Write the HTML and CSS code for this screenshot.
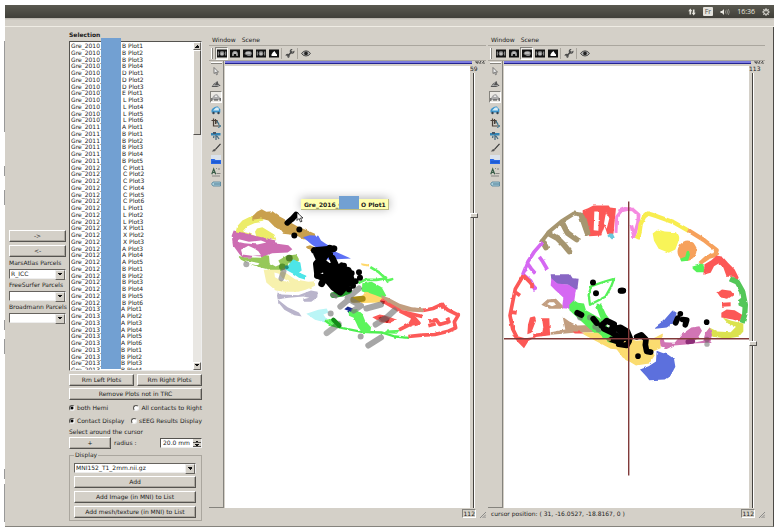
FILE: index.html
```html
<!DOCTYPE html>
<html lang="en">
<head>
<meta charset="utf-8">
<title>Selection</title>
<link rel="stylesheet" href="styles.css">
</head>
<body>
<svg class="defs" aria-hidden="true">
  <filter id="rough" x="-10%" y="-10%" width="120%" height="120%"><feTurbulence type="fractalNoise" baseFrequency=".06" numOctaves="2" seed="4"/><feDisplacementMap in="SourceGraphic" scale="7" xChannelSelector="R" yChannelSelector="G"/></filter>
  <symbol id="i-head" viewBox="0 0 10 8"><path d="M0 0h10v8H0z" fill="#111"/><circle cx="5" cy="4" r="2.4" fill="#777"/><path d="M3.600 3h2.800v2.600H3.600z" fill="#bbb"/><path d="M1.300 2v4M8.700 2v4" stroke="#ddd" stroke-width=".7"/></symbol>
  <symbol id="i-coronal" viewBox="0 0 10 8"><path d="M0 0h10v8H0z" fill="#111"/><path d="M2 6.500Q1.600 1.600 5 1.600T8 6.500L6 6.200V4.500H4V6.200z" fill="#999"/><path d="M3.500 3.500h3" stroke="#ddd"/></symbol>
  <symbol id="i-sagittal" viewBox="0 0 10 8"><path d="M0 0h10v8H0z" fill="#111"/><path d="M1.500 4.500Q2 1.500 5.500 1.500T8.800 4.500L7.500 6.500H5z" fill="#888"/><path d="M3 3.500h4.500" stroke="#eee"/></symbol>
  <symbol id="i-mesh" viewBox="0 0 10 8"><path d="M0 0h10v8H0z" fill="#111"/><path d="M2.500 6.500V5Q3.500 2.500 5.500 1.500L7 4 8 5v1.500z" fill="#fff"/></symbol>
  <symbol id="i-wrench" viewBox="0 0 10 10"><path d="M2 8.200 7.500 2.500" stroke="#4b4b4b" stroke-width="1.700"/><path d="M9.300 2.200A2 2 0 1 1 7.500.6M.6 7.500A1.700 1.700 0 1 1 2.500 9.300" fill="none" stroke="#4b4b4b" stroke-width="1.300"/></symbol>
  <symbol id="i-eye" viewBox="0 0 10 8"><path d="M.5 4Q2 1.300 5 1.300T9.500 4Q8 6.500 5 6.500T.5 4z" fill="#aaa" stroke="#333" stroke-width=".8"/><circle cx="5" cy="3.900" r="1.800" fill="#222"/></symbol>
  <symbol id="i-arrow" viewBox="0 0 10 10"><path d="M3 1.500v6l1.500-1.200 1 2.500 1-.5-1-2.200h2z" fill="#eee" stroke="#555" stroke-width=".7"/></symbol>
  <symbol id="i-plane" viewBox="0 0 10 10"><path d="M.5 8 3 4.500 6.500 2l1 3L9.700 6.500 6 8z" fill="#555"/><path d="M2 6.500h6M5 3l-2 4" stroke="#bbb" stroke-width=".7"/></symbol>
  <symbol id="i-car" viewBox="0 0 10 10"><path d="M1 8V6Q3 2 6 2l2 2.500L9.500 6v2z" fill="#aaa"/><path d="M3.500 5 5 3l1.500 2z" fill="#eee"/><path d="M.8 9V6M4 9V7M6 9V7M9.200 9V6" stroke="#333" stroke-width=".9"/></symbol>
  <symbol id="i-bluecar" viewBox="0 0 10 10"><path d="M.5 7.500V5Q3 1 7 1.500l2.300 3v3z" fill="#3c94cc"/><path d="M2 5.500 5 2.500H7.500L8 5.500z" fill="#d7eef8"/><circle cx="2.500" cy="8" r="1.200" fill="#345"/><circle cx="7.500" cy="8" r="1.200" fill="#345"/></symbol>
  <symbol id="i-crop" viewBox="0 0 10 10"><path d="M.5 2.500h5.500v3M2.500.5v7.500h6M4.500 1v5" fill="none" stroke="#4a4038" stroke-width="1.200"/><path d="M7.300 6.300 9.800 8 7.300 9.700M6 3l2 3" stroke="#268" fill="none"/></symbol>
  <symbol id="i-tap" viewBox="0 0 10 10"><path d="M0 2h9.500v2.500H0z" fill="#3384b4"/><path d="M2 1h3v2H2z" fill="#456"/><path d="M5 4v5M3 5l-.5 2M6 5l2 3" stroke="#4a6d80" stroke-width="1.300"/></symbol>
  <symbol id="i-brush" viewBox="0 0 10 10"><path d="m9.500.8-5 5.500" stroke="#333" stroke-width="1.100"/><path d="M.8 8.500 3 6l2.200.5L4 8.300z" fill="#555"/></symbol>
  <symbol id="i-folder" viewBox="0 0 10 10"><path d="M0 0h10v5H0z" fill="#dbe3ed"/><path d="M0 9V4h3.500l1 1H10v4z" fill="#2868e8"/><path d="M1 7h8" stroke="#1650bb"/></symbol>
  <symbol id="i-label" viewBox="0 0 10 10"><path d="M.8 7.200 2.700 2l2 5.200M1.500 5.500H4" fill="none" stroke="#365a45" stroke-width="1.200"/><path d="M5 1.500h1M7 2h2M5.500 6.500H9.500M1 9h8" stroke="#666" stroke-width=".7"/></symbol>
  <symbol id="i-tag" viewBox="0 0 10 10"><path d="m.5 5 1.500-2h7.500v4H2z" fill="#acd0dc" stroke="#4d7f97" stroke-width=".8"/><path d="M3 5h6" stroke="#487991" stroke-width="1"/></symbol>
</svg>

<div class="desktop">
  <header class="topbar">
    <svg class="tray" viewBox="0 0 8 8"><path d="M2.300 6.500V2M5.700 1.500V6" stroke="#e8e6df" stroke-width="1.600"/><path d="M.3 3.200 2.300.5l2 2.700zM3.700 4.800l2 2.700 2-2.700z" fill="#e8e6df"/></svg>
    <span class="lang">Fr</span>
    <svg class="tray wide" viewBox="0 0 10 8"><path d="M.5 3h1.500l2-2v6L2 5H.5z" fill="#e8e6df"/><path d="M5.300 2.500q1 1.500 0 3M6.800 1.700q1.500 2.300 0 4.600M8.300 1q2 3 0 6" fill="none" stroke="#a9a79f" stroke-width=".7"/></svg>
    <span class="clock">16:36</span>
    <svg class="tray" viewBox="0 0 8 8"><circle cx="4" cy="4" r="2.300" fill="none" stroke="#e8e6df" stroke-width="1"/><path d="M4 .3v3.200M.3 4h1.400M6.300 4h1.400M4 6.300v1.400M1.400 1.400l1 1M5.600 5.600l1 1M1.400 6.600l1-1M5.600 2.400l1-1" stroke="#e8e6df" stroke-width="1.100"/></svg>
  </header>
  <div class="band"></div>

  <main class="workspace">
    <section class="parcels">
      <button class="btn move">-&gt;</button>
      <button class="btn move">&lt;-</button>
      <label for="mars">MarsAtlas Parcels</label>
      <div class="combo"><select id="mars"><option>R_ICC</option></select></div>
      <label for="free">FreeSurfer Parcels</label>
      <div class="combo"><select id="free"><option></option></select></div>
      <label for="brod">Broadmann Parcels</label>
      <div class="combo"><select id="brod"><option></option></select></div>
    </section>

    <section class="selection">
      <h1>Selection</h1>
      <div class="listbox">
        <ul class="plots">
          <li><span>Gre_2010_</span>B Plot1</li><li><span>Gre_2010_</span>B Plot2</li><li><span>Gre_2010_</span>B Plot3</li><li><span>Gre_2010_</span>B Plot4</li>
          <li><span>Gre_2010_</span>D Plot1</li><li><span>Gre_2010_</span>D Plot2</li><li><span>Gre_2010_</span>D Plot3</li><li><span>Gre_2010_</span>E Plot1</li>
          <li class="in"><span>Gre_2010_</span>L Plot3</li><li class="in"><span>Gre_2010_</span>L Plot4</li><li class="in"><span>Gre_2010_</span>L Plot5</li><li class="in"><span>Gre_2010_</span>L Plot6</li>
          <li><span>Gre_2011_</span>A Plot1</li><li><span>Gre_2011_</span>B Plot1</li><li><span>Gre_2011_</span>B Plot2</li><li><span>Gre_2011_</span>B Plot3</li><li><span>Gre_2011_</span>B Plot4</li><li><span>Gre_2011_</span>B Plot5</li>
          <li class="in"><span>Gre_2012_</span>C Plot1</li><li class="in"><span>Gre_2012_</span>C Plot2</li><li class="in"><span>Gre_2012_</span>C Plot3</li><li class="in"><span>Gre_2012_</span>C Plot4</li><li class="in"><span>Gre_2012_</span>C Plot5</li><li class="in"><span>Gre_2012_</span>C Plot6</li>
          <li class="in"><span>Gre_2012_</span>L Plot1</li><li class="in"><span>Gre_2012_</span>L Plot2</li><li class="in"><span>Gre_2012_</span>L Plot3</li>
          <li class="in"><span>Gre_2012_</span>X Plot1</li><li class="in"><span>Gre_2012_</span>X Plot2</li><li class="in"><span>Gre_2012_</span>X Plot3</li>
          <li><span>Gre_2012_</span>A Plot3</li><li><span>Gre_2012_</span>A Plot4</li><li><span>Gre_2012_</span>A Plot5</li>
          <li><span>Gre_2012_</span>B Plot1</li><li><span>Gre_2012_</span>B Plot2</li><li><span>Gre_2012_</span>B Plot3</li><li><span>Gre_2012_</span>B Plot4</li><li><span>Gre_2012_</span>B Plot5</li><li><span>Gre_2012_</span>B Plot6</li>
          <li class="out"><span>Gre_2013_</span>A Plot1</li><li class="out"><span>Gre_2013_</span>A Plot2</li><li class="out"><span>Gre_2013_</span>A Plot3</li><li class="out"><span>Gre_2013_</span>A Plot4</li><li class="out"><span>Gre_2013_</span>A Plot5</li><li class="out"><span>Gre_2013_</span>A Plot6</li>
          <li class="out"><span>Gre_2013_</span>B Plot1</li><li class="out"><span>Gre_2013_</span>B Plot2</li><li class="out"><span>Gre_2013_</span>B Plot3</li><li class="out"><span>Gre_2013_</span>B Plot4</li>
        </ul>
        <div class="scroll"><button class="cap up" aria-label="Scroll up"></button><div class="thumb"></div><button class="cap down" aria-label="Scroll down"></button></div>
        <div class="mask"></div>
      </div>
      <div class="pair"><button class="btn">Rm Left Plots</button><button class="btn">Rm Right Plots</button></div>
      <button class="btn">Remove Plots not in TRC</button>
      <div class="radios"><label><input type="radio" name="hemi" checked>both Hemi</label><label><input type="radio" name="hemi">All contacts to Right</label></div>
      <div class="radios"><label><input type="radio" name="disp" checked>Contact Display</label><label><input type="radio" name="disp">sEEG Results Display</label></div>
      <p class="hint">Select around the cursor</p>
      <div class="radius">
        <button class="btn">+</button>
        <label for="radius">radius :</label>
        <div class="spin"><input id="radius" type="text" value="20.0 mm"><div class="steps"><button class="up" aria-label="Increase"></button><button class="down" aria-label="Decrease"></button></div></div>
      </div>
      <fieldset class="display">
        <legend>Display</legend>
        <div class="stack">
          <div class="combo"><select aria-label="Display"><option>MNI152_T1_2mm.nii.gz</option></select></div>
          <button class="btn">Add</button>
          <button class="btn">Add Image (in MNI) to List</button>
          <button class="btn">Add mesh/texture (in MNI) to List</button>
        </div>
      </fieldset>
    </section>

    <section class="viewer">
      <nav class="menu"><a href="#">Window</a><a href="#">Scene</a></nav>
      <div class="toolbar">
        <i class="grip"></i>
        <button class="tool on" aria-label="Axial"><svg><use href="#i-head"/></svg></button>
        <button class="tool" aria-label="Coronal"><svg><use href="#i-coronal"/></svg></button>
        <button class="tool" aria-label="Sagittal"><svg><use href="#i-sagittal"/></svg></button>
        <button class="tool" aria-label="Oblique"><svg><use href="#i-head"/></svg></button>
        <button class="tool" aria-label="3D"><svg><use href="#i-mesh"/></svg></button>
        <i class="sep"></i>
        <button class="tool" aria-label="Settings"><svg><use href="#i-wrench"/></svg></button>
        <i class="sep"></i>
        <button class="tool" aria-label="View"><svg><use href="#i-eye"/></svg></button>
      </div>
      <div class="body">
        <div class="side">
          <i class="bar"></i>
          <button class="tool" aria-label="Select"><svg><use href="#i-arrow"/></svg></button>
          <button class="tool" aria-label="Plane"><svg><use href="#i-plane"/></svg></button>
          <button class="tool on" aria-label="Move"><svg><use href="#i-car"/></svg></button>
          <button class="tool" aria-label="Turn"><svg><use href="#i-bluecar"/></svg></button>
          <button class="tool" aria-label="Transform"><svg><use href="#i-crop"/></svg></button>
          <button class="tool" aria-label="Flight"><svg><use href="#i-tap"/></svg></button>
          <button class="tool" aria-label="Brush"><svg><use href="#i-brush"/></svg></button>
          <button class="tool" aria-label="Open"><svg><use href="#i-folder"/></svg></button>
          <button class="tool" aria-label="Annotate"><svg><use href="#i-label"/></svg></button>
          <button class="tool" aria-label="Tag"><svg><use href="#i-tag"/></svg></button>
        </div>
        <div class="stage">
          <div class="progress"></div>
          <div class="view">
            <svg class="scene" viewBox="225 66 245 441">
              <g transform="translate(225 190) scale(.333333)">
                <g class="tissue">
                  <path fill="#ecec68" fill-rule="evenodd" d="m84 74 32 6-2 14-26 4-22 10-14 16 20 4 22 10-4-14 6-10 16-4 16 10 20 12 6 16-32-4-40-4-32-8-18-6 4-18 16-18z"/>
                  <path fill="#c9a04e" d="m82 78 14-14 14-8 14 8 18-2 22 16 22 12 32 18 24 10 28 12 0 12-10 6-26-2-20-12-40-4-14-18-10-2-20-20-22-6-26 4z"/>
                  <path fill="#96c85a" fill-rule="evenodd" d="m38 196 20 4 50 2 6-10 18 4 2 22 18 10 14-6-6-12 24-14 30-4 8 14-8 14-24-2-2 12-24 10-22 0-32-8-38-12-24-12zM60 210l44 8-10 6-26-6z"/>
                  <path fill="#cd6db2" fill-rule="evenodd" d="m26 120 24 6 50 12 52 12-6 8 44 6 12 12-14 10-46 2-30 10-30-2-2 6-28-2-8-8-20-28-4-28zM42 146l30 8 36-4 16 6-26 6-40-4-20-4zM48 178l22-12 18 8 12 8 8 12-28 2-28-4z"/>
                  <path fill="#4de5e8" d="m180 236 14-16 10-14 22 10 4 24-8 6 22 10-2 12-20-6-20-14z"/>
                  <path fill="#f7f1ad" fill-rule="evenodd" d="m116 238 48 0 20 10 26 18 40 8 20-2 0 14-28 12-22 6-38 0-30-4-28-24zM148 246l2 14 18 10 28 6-24-14-10-12z"/>
                  <path fill="#5c70f5" d="m234 140 20-6 26 2 8 14 12 8 20 12 12 14 46 20-70 4-20-28-28-18z"/>
                  <path fill="#c9a04e" d="m243 168 12-4 18 8-6 10-12-4z"/>
                </g>
                <circle cx="193" cy="203" r="10" fill="#4f7f27"/><circle cx="172" cy="229" r="10" fill="#55912e"/><circle cx="185" cy="230" r="6" fill="#258c80"/>
                <circle cx="64" cy="221" r="9" fill="#777" opacity=".6"/><path d="m176 242-7 22" stroke="#777" stroke-width="17" stroke-linecap="round" opacity=".6"/>
                <path d="m187 97 14-12M213 72l-12 14" stroke="#000" stroke-width="17" stroke-linecap="round"/><circle cx="223" cy="117" r="9"/><circle cx="208" cy="135" r="9"/>
              </g>
              <g transform="translate(285 240) scale(.333333)">
                <g class="tissue">
                  <path fill="#b9b4cb" d="m-22 156 12 6 50 2 38-14 20 4-1 16-18 14-24 0 0-8 18-4-18-4-44 4-33 4 12 10 18 14 34 16 8 12-22-4-30-16-18-22-4-20z"/>
                  <path fill="#baf5f6" d="m64 220 36-12 25-4 6 12-16 6 10 14-5 10-30-8z"/>
                  <path fill="none" stroke="#4eee50" stroke-width="7" d="m120 240 20 14 30 8 60 12 60 2 40 12 42 4"/>
                  <path fill="#5cf55c" d="m190 208 26-2 16 14 8 20 18 20-2 16-22 2-14-16-6-14-8-16-14-6zM122 238l28-4 18 16-10 12zM232 128l28-4 30 16 14 26-14 8-30-10-30-12zM305 270l40-2-10 12-40-2z"/>
                  <path fill="none" stroke="#5cf55c" stroke-width="8" stroke-linejoin="round" d="m256 80 24 14 22 20-28 4-34 0-20 10M302 114l8 12M305 120l20-4"/>
                  <path fill="#ffd86b" d="m198 172 34-6 10-12 30 10 30 12-16 10-80 2zM228 68l24 4 0 6-22-4z"/>
                  <path fill="#c29e80" d="m288 164 22 8 34 18 36 10 38 4-6 11-42-2-40-10-34-20z"/>
                  <path fill="none" stroke="#fc5a58" stroke-width="11" stroke-linejoin="round" d="m288 178 34 20 28 16 36 18-12 20-32 16M350 214l62 14M388 232l14 16-14 4M414 210l30-6 26-12 18 16 32 16-12 20 4 18-22 10-40 10-40 2-40 4M432 242l22-4 10 14 28-8-6-12M430 256l22-6"/>
                  <path fill="#fc5a58" d="m262 230 22-8 20 4 32 12-20 10-28-2zM462 188l14-2 8 14-14 6zM380 228l12 2 2 22-20 6z"/><path fill="#b51a1a" d="m280 232 20-6 14 8-4 10-20 0zM284 180l16 2-4 12z"/>
                  <path fill="#162c91" d="m178 206 10-8 16 6-6 10z"/>
                </g>
                <path d="m205 178 28-3" stroke="#a88b18" stroke-width="18" stroke-linecap="round"/>
                <path d="m125 278 36-28" stroke="#111" opacity=".33" stroke-width="18" stroke-linecap="round"/>
                <path d="m250 315 38-24M227 288v0M137 219v0M244 204l44-12M272 252l34-22 22-20M188 172l34-28M166 198l26-22 36 20-22 14" fill="none" stroke="#777" opacity=".65" stroke-width="18" stroke-linecap="round" stroke-linejoin="round"/>
                <path d="m145 238 18 18" stroke="#128b18" stroke-width="13" stroke-linecap="round"/>
                <path d="m144 164 28-4 20-9" fill="none" stroke="#27a330" stroke-width="17" stroke-linecap="round"/>
                <path d="m142 163 10 5" stroke="#777" stroke-width="12" opacity=".8" stroke-linecap="round"/>
                <path d="m88 30 57-5M88 30l30 14-24 26 4 35 28 12 20 24 20 14 18-20 16-14-10-32-34-6-14-30M110 130l12-24 30-4 18-26M100 90l40-14M140 120l40 6M118 44l16-4" fill="none" stroke="#000" stroke-width="20" stroke-linecap="round" stroke-linejoin="round"/>
                <path d="m84 40 30-20 20 20-10 20 26 20 30-5 16 35-10 35-26 6-20-16-20-30-20-30z"/>
                <path d="M200 98v0M222 95v0M225 112v0M212 122v0M204 136v0M192 147v0M158 148v0M177 76v0M180 92v0M112 60v0M96 106v0M134 22v0M148 24v0" stroke="#000" stroke-width="18" stroke-linecap="round"/>
              </g>
              <path d="m297 212 0 8 2-2 1.500 3.500 1.500-.7-1.500-3.300h2.500z" fill="#fff" stroke="#000" stroke-width=".7"/>
            </svg>
            <div class="tip">Gre_2016_G<i></i><span>O Plot1</span></div>
          </div>
        </div>
        <div class="slice"><svg class="cut" viewBox="0 0 10 4"><path d="M1 0v1.500l2 .8V0M5 3V1l1.500-1M7 2.500 9 0M9 3V1.500" fill="none" stroke="#333" stroke-width=".9"/></svg><output>59</output><input type="range" min="0" max="181" value="59" aria-label="Slice"></div>
      </div>
      <footer class="status"><span></span><output>112</output><svg class="corner" viewBox="0 0 6 6"><path d="M0 6 6 0M2.500 6 6 2.500M4.500 6 6 4.500" stroke="#777" stroke-width=".8"/></svg></footer>
    </section>

    <section class="viewer">
      <nav class="menu"><a href="#">Window</a><a href="#">Scene</a></nav>
      <div class="toolbar">
        <i class="grip"></i>
        <button class="tool" aria-label="Axial"><svg><use href="#i-head"/></svg></button>
        <button class="tool" aria-label="Coronal"><svg><use href="#i-coronal"/></svg></button>
        <button class="tool on" aria-label="Sagittal"><svg><use href="#i-sagittal"/></svg></button>
        <button class="tool" aria-label="Oblique"><svg><use href="#i-head"/></svg></button>
        <button class="tool" aria-label="3D"><svg><use href="#i-mesh"/></svg></button>
        <i class="sep"></i>
        <button class="tool" aria-label="Settings"><svg><use href="#i-wrench"/></svg></button>
        <i class="sep"></i>
        <button class="tool" aria-label="View"><svg><use href="#i-eye"/></svg></button>
      </div>
      <div class="body">
        <div class="side">
          <i class="bar"></i>
          <button class="tool" aria-label="Select"><svg><use href="#i-arrow"/></svg></button>
          <button class="tool" aria-label="Plane"><svg><use href="#i-plane"/></svg></button>
          <button class="tool on" aria-label="Move"><svg><use href="#i-car"/></svg></button>
          <button class="tool" aria-label="Turn"><svg><use href="#i-bluecar"/></svg></button>
          <button class="tool" aria-label="Transform"><svg><use href="#i-crop"/></svg></button>
          <button class="tool" aria-label="Flight"><svg><use href="#i-tap"/></svg></button>
          <button class="tool" aria-label="Brush"><svg><use href="#i-brush"/></svg></button>
          <button class="tool" aria-label="Open"><svg><use href="#i-folder"/></svg></button>
          <button class="tool" aria-label="Annotate"><svg><use href="#i-label"/></svg></button>
          <button class="tool" aria-label="Tag"><svg><use href="#i-tag"/></svg></button>
        </div>
        <div class="stage">
          <div class="progress"></div>
          <div class="view">
            <svg class="scene" viewBox="504 66 245 441">
              <g transform="translate(500 195) scale(.333333)">
                <g class="tissue">
                  <path fill="#fc5856" fill-rule="evenodd" d="m248 44 16-6 16-8 46 0 4 6 18 2-4 40-4 38-18 0-8-24-10 28-36 2-12-28-8-24zM283 48l-2 56 14 2 2-58zM318 50l-6 34 8 16 8-32z"/>
                  <path fill="#67c9dc" d="m326 114 12 0 6 12-8 6-10-10z"/>
                  <path fill="none" stroke="#f58ae0" stroke-width="9" d="m348 112 2-48 14-18 32-7"/>
                  <path fill="none" stroke="#a6966f" stroke-width="12" stroke-linejoin="round" d="m122 142 26-34 36-30 38-24 22 4 12 20 10 40"/>
                  <path fill="none" stroke="#a6966f" stroke-width="17" stroke-linecap="round" stroke-linejoin="round" d="M146 114l26 14 18 18 18 22M188 84l14 28 28 20M128 138l10 18M246 66l16 46"/>
                  <path fill="none" stroke="#d568f2" stroke-width="11" d="m128 140-26 30-18 28-16 40M84 206l10 14 12 14M118 184l10 14 14 24M68 236l24 20 14 28M92 262l14 16"/>
                  <path fill="none" stroke="#fc5856" stroke-width="11" stroke-linejoin="round" d="m70 240-24 40-8 40-8 40 8 40 12 24M100 420l50-6M70 240l26 26 0 12M46 290l14 10M36 350l14 2"/>
                  <path fill="#fc5856" d="m90 366 14-4 4 14-14 36-12 4 2-28zM126 368l22 0 2 48-26 6 6-26zM36 418l40 10 34-4-24 12-14 22-20-20z"/>
                  <path fill="#8866c4" d="m152 236 58 0 8 12 18 2-4 32-8 0-20-14-30-2-20-14z"/>
                  <path fill="#d568f2" d="m154 248 18 16 34 4 22 14-6 40-14 18-22-2 4-32-24-22-14-14z"/>
                  <path fill="#c29e80" fill-rule="evenodd" d="m124 328 18-16 26-2 20 20 0 10-40 0zM142 326l14 6 12-4-6-8-14 0zM188 364l20 14 24 12 54-2 10 8-14 14-60 2-70 6 0-8 44-8z"/>
                  <path fill="#57f159" d="m208 328 14-14 12 8 18 2 6 20 42 24 40 40 0 22 20 20-22 10-30-26-40-34-60-56zM288 332l16-6 14 30 10 14-24 4zM290 324l10 2-10 8z"/>
                  <path fill="none" stroke="#57f159" stroke-width="7" stroke-linejoin="round" d="m274 272 40-14 28-8-8 22-18 32-46 24-4-30z"/>
                  <path fill="#fbdc6f" d="m250 410 44 2 34 28 60 12 4 14-60-6-46-24-36-20z"/><path fill="#fc5856" d="m218 408 22 0 12 6-28 0z"/>
                </g>
                <path d="m238 358 2 8M270 366v0M286 394v0M296 402v0M360 436v0" stroke="#777" opacity=".65" stroke-width="18" stroke-linecap="round"/>
                <path d="M279 261v0M288 293v0M362 286l6 0M232 352l12 6M280 370l10 12M304 390l16-14 22 10-8 16 28-6 20 12 8 20-18-12 6 20-20-10-24-16-22-10M334 432l26 8 10-16 22 26" fill="none" stroke="#000" stroke-width="18" stroke-linecap="round" stroke-linejoin="round"/>
                <circle cx="327" cy="432" r="6" fill="#96843c"/>
              </g>
              <g transform="translate(620 195) scale(.333333)">
                <g class="tissue">
                  <path fill="none" stroke="#f58ae0" stroke-width="11" stroke-linejoin="round" d="m-4 48 18-8 24 2 18 16-2 24-12 40-8-32"/>
                  <path fill="none" stroke="#f8ed50" stroke-width="13" stroke-linejoin="round" d="m50 130 8-16 4-28 10-22 12-10 26 8 50 18 46 26"/>
                  <path fill="none" stroke="#f6a15b" stroke-width="13" stroke-linejoin="round" d="m204 104 48 30 38 30-4 14-26 8-20 18M250 196l26-18"/>
                  <path fill="#f8f458" d="m98 114 16-12 20 6 34 2 10 20-12 32-20 10-30-12-14-24z"/>
                  <ellipse cx="201" cy="166" rx="28" ry="31" fill="#f6a15b" transform="rotate(20 201 166)"/>
                  <path fill="#57f159" d="m180 190 16-6 4-16 6-4 4 14-6 18-20 2zM218 210l20-6 12 2 6 24-26 0-12-10z"/>
                  <path fill="#fc5856" d="m254 206 20-12 16-14 18 4 16 18 20 20 12 24-6 14-12-16-18 0-10-28-14-12-14 8-10 20-22 6zM292 292l14-10 26 4 10 12-18 12-22-4zM306 322l26-2 0 12-26 2zM304 352l16-10 24 2 26 16-12 18-20-6-34-6z"/>
                  <path fill="none" stroke="#53c759" stroke-width="16" stroke-linejoin="round" d="m330 250 22 10 16 28 8 40-2 30-8 24"/><path fill="#53c759" d="m354 314 16-12 10 20-6 16-18-8z"/>
                  <path fill="#dbe34f" d="m308 366 26 10 36 8 0 24-14 16-40 6-44-8-10-16 6-10 24 12 40 2 16-16-24-10z"/>
                  <path fill="#d174b4" d="m116 430 14-2 4 12 30 2 20-24 30-22 24-4 8 14-14 24-26 16-44 4-20 10-20-8zM256 412l14-16 6 22-6 24-60 2 40-8z"/>
                  <path fill="#fbdc6f" d="m-14 456 40-28 22 8 44-4 18-8 18-10 0 10-8 10 2 24-24 10 6 12-16 24-40 6-40-24z"/>
                  <path fill="#5b6fdd" d="m106 394 26-20 26-30 12 8-8 30-22 14-34 4zM110 466l16 6 16 4 20 14 4 24-14 26-18 12-46 2-8-10-20-22 26-10 22-14z"/>
                </g>
                <path fill="none" stroke="#000" stroke-width="17" stroke-linecap="round" stroke-linejoin="round" d="M4 285l6 0M260 380v0M181 355v0M173 368l-6 14M188 372l12 2-4 14M54 482v0M50 424l14-6 14 14-2 16 4 20 12 2M-4 404l22 22 10 10-8 14-24-4 14-22"/>
                <path d="m204 439 14-2" stroke="#8d2e78" stroke-width="15" stroke-linecap="round"/><circle cx="261" cy="432" r="8" fill="#9c5a86"/><circle cx="261" cy="446" r="8" fill="#777" opacity=".6"/>
              </g>
              <path d="M504 338.200H749M628.700 201V475" stroke="#813a3a" stroke-width="1.400"/>
            </svg>
          </div>
        </div>
        <div class="slice"><svg class="cut" viewBox="0 0 10 4"><path d="M1 0v1.500l2 .8V0M5 3V1l1.500-1M7 2.500 9 0M9 3V1.500" fill="none" stroke="#333" stroke-width=".9"/></svg><output>113</output><input type="range" min="0" max="181" value="113" aria-label="Slice"></div>
      </div>
      <footer class="status"><span>cursor position: ( 31, -16.0527, -18.8167, 0 )</span><output>112</output><svg class="corner" viewBox="0 0 6 6"><path d="M0 6 6 0M2.500 6 6 2.500M4.500 6 6 4.500" stroke="#777" stroke-width=".8"/></svg></footer>
    </section>
  </main>
</div>
</body>
</html>
```
FILE: styles.css
```css
* { box-sizing: border-box; }

body {
  margin: 0;
  background: #fff;
  color: #222;
  font: 6px/8px "DejaVu Sans", sans-serif;
}

button, input, select {
  margin: 0;
  padding: 0;
  border: 0;
  border-radius: 0;
  background: none;
  color: inherit;
  font: inherit;
}

svg { display: block; }
.defs { position: absolute; width: 0; height: 0; }

.desktop {
  display: flex;
  flex-direction: column;
  height: 100vh;
  min-height: 480px;
  padding: 5px;
}

.topbar {
  display: flex;
  flex: none;
  align-items: center;
  justify-content: flex-end;
  gap: 7px;
  height: 13px;
  padding-right: 4px;
  background: linear-gradient(#5a5950, #403f39);
  color: #e8e6df;
  font: 7px/9px "Open Sans", sans-serif;
}
.tray { width: 8px; height: 8px; }
.tray.wide { width: 10px; }
.lang {
  padding: 0 2px;
  border-radius: 1px;
  background: #e4e2dc;
  color: #55534c;
}

.band {
  flex: none;
  height: 9px;
  border-bottom: 1px solid #efece4;
  background: linear-gradient(#b5b1a9, #d4d0c8 2px);
}

.workspace {
  position: relative;
  display: grid;
  flex: 1;
  grid-template-columns: 57px 133px minmax(0, 1fr) minmax(0, 1fr);
  min-height: 0;
  padding: 0 8px 0 4px;
  border-right: 1px solid #4c4a46;
  border-bottom: 1px solid #85837d;
  background: #d4d0c8;
}
/* edge of the window lying behind this one */
.workspace::before {
  position: absolute;
  top: 14px;
  bottom: 4px;
  left: -1px;
  width: 1px;
  background: linear-gradient(#999 0 19%, transparent 0 26%, #999 0 28%, transparent 0 31%, #999 0 34%, transparent 0 58%, #999 0 60%, transparent 0 62%, #999 0 65%, transparent 0 89%, #999 0 91%, transparent 0 92%, #999 0);
  content: "";
}

.btn {
  height: 12px;
  border: 1px solid;
  border-color: #fff #55534f #55534f #fff;
  background: #d4d0c8;
  box-shadow: inset -1px -1px #aaa69e;
  line-height: 10px;
  text-align: center;
  white-space: nowrap;
}

.combo {
  position: relative;
  height: 10px;
  border: 1px solid;
  border-color: #66635e #eee #eee #66635e;
  background: #fff;
}
.combo select {
  display: block;
  width: 100%;
  height: 8px;
  padding-left: 1px;
  appearance: none;
  line-height: 8px;
}
.combo::after {
  position: absolute;
  top: 0;
  right: 0;
  width: 8px;
  height: 8px;
  border: 1px solid;
  border-color: #eee #66635e #66635e #eee;
  background: conic-gradient(from -45deg at 50% 75%, #111 90deg, #d4d0c8 0) center / 4px 4px no-repeat #d4d0c8;
  pointer-events: none;
  content: "";
}

.parcels {
  display: flex;
  flex-direction: column;
  justify-content: center;
  gap: 1px;
}
.parcels label { height: 10px; line-height: 10px; white-space: nowrap; }
.parcels .move { margin-bottom: 2px; }
.parcels .move + .move { margin-bottom: 0; }

.selection {
  display: flex;
  flex-direction: column;
  gap: 2px;
  min-height: 0;
  margin-left: 3px;
  margin-right: -3px;
  padding: 3px 0 5px;
}
.selection h1 { margin: 0; font-size: 6px; line-height: 9px; }

.listbox {
  position: relative;
  display: flex;
  flex: 1;
  min-height: 0;
  margin-bottom: 1px;
  border: 1px solid;
  border-color: #55534f #eee #eee #55534f;
  background: #fff;
}
.plots {
  display: flex;
  flex: 1;
  flex-direction: column;
  margin: 0;
  padding: 0 0 0 1px;
  overflow: hidden;
  list-style: none;
}
.plots li {
  display: flex;
  flex: 2 0 1px;
  align-items: flex-start;
  min-height: 0;
  line-height: 7px;
  white-space: nowrap;
}
/* the list is scrolled so that its last visible row shows by half */
.plots li:last-child { flex-grow: 1; }
.plots span { width: 51px; }
.plots .in span { width: 52px; }
.plots .out span { width: 50px; }
.mask {
  position: absolute;
  top: -4px;
  bottom: 1px;
  left: 31px;
  width: 20px;
  background: #72a0d2;
}
.scroll {
  display: flex;
  flex-direction: column;
  width: 8px;
  background: #e9e7e3;
}
.scroll .thumb {
  height: 26%;
  border: 1px solid;
  border-color: #fff #55534f #55534f #fff;
  background: #d4d0c8;
}
.cap {
  height: 8px;
  border: 1px solid;
  border-color: #fff #66635e #66635e #fff;
  background: conic-gradient(from -45deg at 50% 75%, #111 90deg, #d4d0c8 0) center / 4px 4px no-repeat #d4d0c8;
}
.cap.up { background: conic-gradient(from 135deg at 50% 25%, #111 90deg, #d4d0c8 0) center / 4px 4px no-repeat #d4d0c8; }
.cap.down { margin-top: auto; }

.pair { display: grid; grid-template-columns: 1fr 1fr; gap: 3px; }

.radios {
  display: flex;
  align-items: center;
  justify-content: space-between;
  height: 11px;
  white-space: nowrap;
}
.radios label { display: flex; align-items: center; gap: 2px; }
.radios input {
  width: 6px;
  height: 6px;
  border: 1px solid;
  border-color: #55534f #eee #eee #55534f;
  border-radius: 50%;
  background: #fff;
  appearance: none;
}
.radios input:checked { background: radial-gradient(#000 1px, #fff 2px); }

.hint { margin: 0; line-height: 7px; }

.radius { display: flex; align-items: center; gap: 3px; }
.radius .btn { width: 42px; }
.spin {
  display: flex;
  width: 42px;
  height: 10px;
  margin-left: auto;
  border: 1px solid;
  border-color: #55534f #eee #eee #55534f;
  background: #fff;
}
.spin input { flex: 1; min-width: 0; padding-left: 2px; line-height: 8px; }
.steps { display: grid; width: 8px; }
.steps button {
  height: 4px;
  border-bottom: 1px solid #55534f;
  background: conic-gradient(from 135deg at 50% 0, #111 90deg, #d4d0c8 0) center / 4px 2px no-repeat #d4d0c8;
}
.steps .down { background: conic-gradient(from -45deg at 50% 100%, #111 90deg, #d4d0c8 0) center / 4px 2px no-repeat #d4d0c8; }

.display {
  min-width: 0;
  margin: 0;
  padding: 4px 5px 2px 4px;
  border: 1px solid #aaa69e;
}
.display legend { padding: 0 1px; line-height: 8px; }
.stack { display: flex; flex-direction: column; gap: 3px; }

.viewer {
  display: flex;
  flex-direction: column;
  min-width: 0;
  min-height: 0;
  margin-left: 2px;
  padding: 8px 0 7px;
}
.selection + .viewer { margin-left: 10px; margin-right: -4px; }
.selection + .viewer + .viewer { margin-left: 6px; }

.menu { display: flex; gap: 6px; height: 10px; padding-left: 3px; line-height: 10px; }
.menu a { color: inherit; text-decoration: none; }

.toolbar {
  display: flex;
  align-items: center;
  height: 16px;
  border-top: 1px solid #aaa69e;
  border-bottom: 1px solid #aaa69e;
}
.toolbar .grip { width: 2px; height: 11px; margin: 0 2px; border-left: 1px solid #fff; border-right: 1px solid #85837d; }
.toolbar .sep { width: 1px; height: 11px; margin: 0 1px; background: #aaa69e; }
.tool {
  display: flex;
  flex: none;
  align-items: center;
  justify-content: center;
  width: 13px;
  height: 13px;
  border: 1px solid transparent;
}
.tool svg { width: 10px; height: 9px; }
.tool.on { border-color: #85837d #fff #fff #85837d; background: #ebe9e4; }

.body { display: flex; flex: 1; min-height: 0; }

.side {
  display: flex;
  flex-direction: column;
  align-items: center;
  width: 15px;
  border-right: 1px solid #85837d;
  border-bottom: 1px solid #85837d;
}
.side .bar { width: 11px; height: 2px; margin: 1px 0; border-top: 1px solid #fff; border-bottom: 1px solid #85837d; }
.side .tool { width: 12px; height: 12px; margin-bottom: 1px; }
.side .tool:nth-of-type(n+6) { margin-bottom: 0; }
.side .tool svg { width: 10px; height: 10px; }

.stage {
  display: flex;
  flex: 1;
  flex-direction: column;
  min-width: 0;
  padding-left: 1px;
}
.progress {
  flex: none;
  height: 3px;
  margin: 0 -2px 2px 0;
  background: linear-gradient(#7b7be0 2px, #24248f 2px);
}
.view { position: relative; flex: 1; min-height: 0; background: #fff; }
.scene { width: 100%; height: 100%; }
.tissue { filter: url(#rough); }

.tip {
  position: absolute;
  top: 30%;
  left: 31%;
  display: flex;
  width: 88px;
  height: 11px;
  padding-left: 3px;
  border-right: 1px solid #bcbc85;
  border-bottom: 1px solid #bcbc85;
  background: #ffffaf;
  box-shadow: 0 -1px 10px rgba(0, 0, 0, .3);
  font-weight: bold;
  line-height: 11px;
  white-space: nowrap;
}
.tip i { position: absolute; top: -3px; bottom: 0; left: 38px; width: 20px; background: #72a0d2; }
.tip span { position: absolute; left: 60px; }

.slice {
  display: flex;
  flex: none;
  flex-direction: column;
  width: 16px;
}
.slice .cut { width: 10px; height: 4px; margin-left: 5px; }
.slice output { height: 8px; line-height: 8px; }
.slice input {
  flex: 1;
  width: 8px;
  min-height: 0;
  background: linear-gradient(90deg, #d4d0c8 3px, #45433f 3px 4px, #fff 4px 5px, #d4d0c8 5px);
  appearance: none;
  writing-mode: vertical-lr;
}
.slice input::-webkit-slider-thumb {
  width: 8px;
  height: 5px;
  border: 1px solid;
  border-color: #fff #55534f #55534f #fff;
  background: #d4d0c8;
  appearance: none;
}

.status { display: flex; flex: none; align-items: center; height: 11px; padding-left: 3px; white-space: nowrap; }
.status output {
  margin-left: auto;
  padding-left: 1px;
  border: 1px solid;
  border-color: #85837d #fff #fff #85837d;
  line-height: 7px;
}
.corner { width: 6px; height: 6px; margin: 3px 0 0 4px; }
```
